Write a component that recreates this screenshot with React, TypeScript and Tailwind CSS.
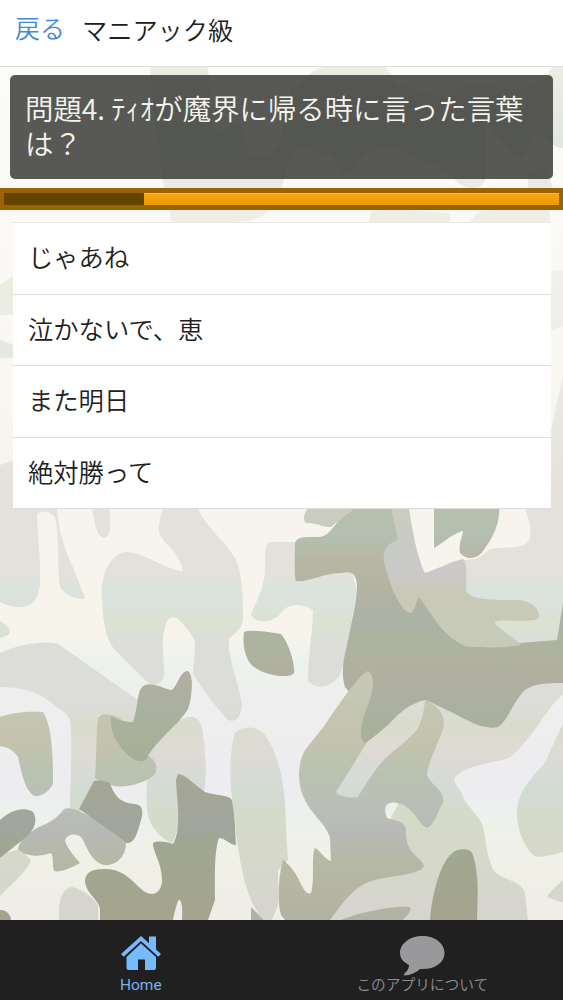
const choices = ["じゃあね", "泣かないで、恵", "また明日", "絶対勝って"]

const elapsed = 25.2

const lightShapes = [
  "M0 508H57C58 530 65 550 72 565L85 598C80 602 62 594 60 586C57 570 60 540 55 518C50 510 38 510 37 515C38 540 41 560 40 585C38 600 32 607 20 607C10 607 5 604 0 602Z",
  "M0 465L14 460V509H0Z",
  "M92 500H110V530C108 540 101 539 98 533C94 524 94 516 92 508Z",
  "M0 621C7 625 13 630 8 635L0 638Z",
  "M166 500C160 515 157 530 160 535C165 545 180 552 183 571C165 570 147 553 125 552C110 555 102 574 102 590C102 620 106 640 115 650L148 683C155 686 163 685 164 675C165 660 160 645 165 627C168 616 174 614 182 623C190 633 195 637 195 646L193 674C203 690 215 706 228 720C235 722 240 720 242 705C239 683 231 668 229 648V638C235 634 243 628 243 618C243 590 241 572 237 562C230 545 203 525 198 508V500Z",
  "M270 542C265 545 265 550 265 572C263 590 257 600 251 614C254 624 272 624 281 613C287 604 300 602 313 610C312 640 307 665 308 681C315 689 330 690 340 675L345 660L357 590L350 565L295 575V542Z",
  "M0 653C20 644 45 640 58 644L138 700V725L98 715L96 780L80 812L70 808C70 780 73 740 70 720C65 709 58 710 52 703C35 690 20 687 0 687Z",
  "M148 755C160 735 172 722 185 718C195 714 202 720 203 735C206 758 207 775 204 791L180 774L178 800C180 820 178 835 172 843C160 838 148 826 147 808C145 785 150 770 148 755Z",
  "M20 849L31 860C25 875 10 885 0 896V855Z",
  "M59 920C58 900 62 888 72 887C85 890 95 900 98 905V920Z",
  "M235 733C242 725 258 726 265 735C280 755 286 790 286 830L288 860L278 870V905L272 920H265C245 905 237 850 234 810C228 780 230 750 235 733Z",
  "M460 560C475 560 480 558 490 549C510 546 528 550 530 537C532 525 527 515 525 508V500H563V645H470Z",
  "M426 700L480 670L563 670V694C548 706 535 735 511 757C495 764 468 763 454 778C456 790 463 790 463 798C475 815 483 820 484 832C487 850 490 868 496 873C508 882 520 880 525 893L528 920H325L375 850L420 760Z",
  "M563 724C550 750 545 765 541 767C525 785 517 795 517 815C518 835 528 855 538 857C550 856 560 853 563 852Z",
  "M563 880C556 886 550 892 547 897C554 900 560 902 563 902Z",
]

const midShapes = [
  "M0 717C12 712 30 711 43 712C52 725 53 755 53 783C50 792 40 797 34 796C25 790 22 775 18 757C12 748 5 747 0 746Z",
  "M98 718C102 712 110 714 120 718L145 755C154 757 159 766 155 774C145 784 125 788 114 786C105 782 98 781 95 778C97 750 96 730 98 718Z",
  "M64 809C72 806 85 814 100 822L126 843C126 855 118 866 104 865C92 862 88 850 82 838C76 832 66 834 65 841C68 850 76 858 80 863C72 868 58 873 54 871C52 865 54 857 51 853C40 857 25 857 18 849C20 838 35 828 46 824C53 820 59 816 64 809Z",
  "M251 907L264 920H251Z",
  "M308 508C303 515 303 520 306 523C315 522 325 528 331 527L355 508Z",
  "M391 508H409C412 530 418 560 425 573C440 568 455 560 463 559C468 563 466 575 466 590C470 600 490 600 520 600C535 602 540 612 539 618C530 624 505 618 494 622C500 630 515 638 521 645C505 648 475 648 465 646C440 635 430 610 419 597C415 605 414 613 410 613C400 610 390 585 388 575C380 555 383 545 398 540Z",
  "M368 671C358 675 335 710 325 725L305 750C297 765 297 785 305 800C312 815 327 825 330 838L331 861C325 860 320 850 315 848C311 855 315 880 311 893C305 897 300 880 295 873C290 865 285 862 283 859C278 880 277 900 281 915L285 920H330C345 900 355 885 375 880C395 875 420 875 424 866C420 855 405 855 406 830C405 820 395 821 387 818C380 800 395 800 405 806C415 812 420 825 427 828C435 825 438 810 443 803C446 790 430 785 427 775C427 765 440 740 444 725C445 712 435 705 426 700L366 744C357 740 361 722 368 705C374 690 375 675 368 671Z",
  "M341 920C360 912 395 905 410 907C412 912 405 917 403 920Z",
]

const darkShapes = [
  "M111 716C118 720 125 722 133 722C140 700 136 690 145 685C155 682 165 690 172 690C178 685 180 671 188 671C194 675 192 695 189 706C185 720 155 740 146 760C138 765 125 755 118 743C112 735 110 725 111 716Z",
  "M94 781C98 779 106 781 110 783C115 798 122 803 135 804C142 805 144 810 141 820C137 835 134 844 126 843C110 830 95 820 79 809Z",
  "M0 820C10 810 25 806 33 812C38 820 35 830 25 838L0 858Z",
  "M0 910C6 909 11 915 11 920H0Z",
  "M178 774C185 774 195 785 205 792C215 796 228 794 232 800C235 815 235 830 236 845C230 845 225 838 219 838C214 850 215 880 215 900L208 920H182C183 905 181 900 179 900C177 901 174 915 173 920H100V910C100 900 87 895 85 882C85 872 92 869 104 869C125 868 135 885 145 892C153 896 160 894 162 882C163 865 152 850 153 843C158 840 168 842 173 844C182 830 177 800 176 780Z",
  "M244 632C250 629 270 632 281 634C290 645 295 665 294 673C290 680 255 675 248 660C243 650 243 640 244 632Z",
  "M434 500H499C501 520 495 535 485 548C480 558 468 562 460 553C458 545 463 535 463 531C455 532 440 545 434 548Z",
  "M430 920C432 895 440 860 455 851C465 847 472 850 473 855C479 875 478 895 477 920Z",
]

// Drawn beneath the mid tones, which overlap its right side
const darkBase =
  "M350 500H400L410 560L430 595L480 640L520 643L557 640L563 603V683C540 683 530 685 522 693C512 705 508 720 498 727C485 730 470 722 455 714L426 700C410 705 395 722 385 728L365 744C355 735 362 720 365 710L345 687C340 670 345 655 348 640C352 620 357 600 357 585C356 572 350 571 341 573C325 573 305 583 296 581C294 575 295 550 295 543C297 536 305 537 318 537C330 537 333 525 350 508Z"

const topShapes = [
  "M150 66H208C210 90 208 115 215 132L240 120C246 140 244 157 262 156C278 154 284 135 284 115L290 90L312 72L325 66H385L398 84C430 90 445 110 460 87C480 80 500 88 520 90L545 78L553 66H563V148C550 148 545 130 530 138C527 158 519 160 513 156C505 145 495 135 487 120C483 140 487 165 485 180C480 192 465 190 455 180C445 165 430 165 405 153C385 145 365 148 358 162L350 175C345 176 335 165 332 155L300 148C285 160 287 180 278 195L264 215C255 222 235 223 172 223C168 200 160 180 160 150C155 130 152 100 150 66Z",
  "M372 211L390 209L450 213V223H368Z",
  "M478 212L500 209H550V223H468Z",
  "M528 173L545 166L553 188H528Z",
]

const sideShapes = [
  "M551 270H563V326L551 330Z",
  "M563 375L551 430V508H563Z",
]

function Camouflage() {
  return (
    <svg
      className="col-start-1 row-start-1 block h-[1000px] w-[563px]"
      viewBox="0 0 563 1000"
      aria-hidden="true"
    >
      <defs>
        <linearGradient id="base" gradientUnits="userSpaceOnUse" x1="0" y1="0" x2="0" y2="1000">
          <stop offset="0.07" stopColor="#fcfbf7" />
          <stop offset="0.25" stopColor="#fbf9f6" />
          <stop offset="0.5" stopColor="#f7f4ee" />
          <stop offset="0.635" stopColor="#f7f4ec" />
          <stop offset="0.66" stopColor="#edf2ed" />
          <stop offset="0.71" stopColor="#eeeeee" />
          <stop offset="0.79" stopColor="#ededf0" />
          <stop offset="0.825" stopColor="#eef1eb" />
          <stop offset="0.86" stopColor="#f0f0e7" />
          <stop offset="0.92" stopColor="#efede6" />
        </linearGradient>
        <linearGradient id="light" gradientUnits="userSpaceOnUse" x1="0" y1="0" x2="0" y2="1000">
          <stop offset="0.22" stopColor="#f5f3f0" />
          <stop offset="0.35" stopColor="#eeece8" />
          <stop offset="0.5" stopColor="#e4e1dc" />
          <stop offset="0.576" stopColor="#e4e1da" />
          <stop offset="0.584" stopColor="#dce3dc" />
          <stop offset="0.605" stopColor="#dbe2dc" />
          <stop offset="0.62" stopColor="#dbe2d2" />
          <stop offset="0.645" stopColor="#dcddd8" />
          <stop offset="0.7" stopColor="#dddcda" />
          <stop offset="0.725" stopColor="#dadccd" />
          <stop offset="0.755" stopColor="#dedad6" />
          <stop offset="0.787" stopColor="#d3dbd5" />
          <stop offset="0.815" stopColor="#d5dac9" />
          <stop offset="0.86" stopColor="#d6d8ca" />
          <stop offset="0.92" stopColor="#d5d4cf" />
        </linearGradient>
        <linearGradient id="mid" gradientUnits="userSpaceOnUse" x1="0" y1="0" x2="0" y2="1000">
          <stop offset="0.51" stopColor="#cacdbd" />
          <stop offset="0.545" stopColor="#c7cbc4" />
          <stop offset="0.57" stopColor="#cbc9c9" />
          <stop offset="0.595" stopColor="#c9c9b6" />
          <stop offset="0.645" stopColor="#c6cbb9" />
          <stop offset="0.71" stopColor="#c4c6b1" />
          <stop offset="0.742" stopColor="#c4c2ae" />
          <stop offset="0.77" stopColor="#b9c3b0" />
          <stop offset="0.81" stopColor="#b9beb7" />
          <stop offset="0.835" stopColor="#b8b8b5" />
          <stop offset="0.86" stopColor="#b5b9a6" />
          <stop offset="0.9" stopColor="#b7b3a2" />
          <stop offset="0.92" stopColor="#afb2a4" />
        </linearGradient>
        <linearGradient id="dark" gradientUnits="userSpaceOnUse" x1="0" y1="0" x2="0" y2="1000">
          <stop offset="0.51" stopColor="#b5bfad" />
          <stop offset="0.535" stopColor="#b4bfb1" />
          <stop offset="0.56" stopColor="#b6b7a3" />
          <stop offset="0.6" stopColor="#b2b2a4" />
          <stop offset="0.625" stopColor="#abb2a5" />
          <stop offset="0.645" stopColor="#adb49d" />
          <stop offset="0.68" stopColor="#b2aea1" />
          <stop offset="0.71" stopColor="#a9b1a0" />
          <stop offset="0.74" stopColor="#a9b199" />
          <stop offset="0.79" stopColor="#a4a596" />
          <stop offset="0.825" stopColor="#a1a69d" />
          <stop offset="0.85" stopColor="#a0a790" />
          <stop offset="0.92" stopColor="#a5a48f" />
        </linearGradient>
        <linearGradient id="top" gradientUnits="userSpaceOnUse" x1="0" y1="66" x2="0" y2="223">
          <stop offset="0" stopColor="#ecede3" />
          <stop offset="0.5" stopColor="#e3e7e0" />
          <stop offset="1" stopColor="#efeee7" />
        </linearGradient>
      </defs>
      <rect width="563" height="1000" fill="url(#base)" />
      <path d="M0 285L14 275V315H0Z" fill="#ebece2" />
      <path d="M0 340L14 345V358H0Z" fill="#e6e9e2" />
      <g fill="url(#top)">
        {topShapes.map((d) => (
          <path key={d} d={d} />
        ))}
      </g>
      <g fill="url(#light)">
        {lightShapes.map((d) => (
          <path key={d} d={d} />
        ))}
        {sideShapes.map((d) => (
          <path key={d} d={d} />
        ))}
      </g>
      <path d={darkBase} fill="url(#dark)" />
      <g fill="url(#mid)">
        {midShapes.map((d) => (
          <path key={d} d={d} />
        ))}
      </g>
      <path
        d="M425 700C410 703 398 714 388 725L366 744L336 792C340 798 355 798 358 797C365 785 375 770 381 763C395 748 412 738 418 728C423 718 424 710 425 700Z"
        fill="url(#light)"
      />
      <g fill="url(#dark)">
        {darkShapes.map((d) => (
          <path key={d} d={d} />
        ))}
      </g>
    </svg>
  )
}

function HomeIcon() {
  return (
    <svg className="h-[34px] w-10" viewBox="0 0 40 34" fill="#76baff" aria-hidden="true">
      <path d="M20 0L28 7.3V0.5H35V13.5L40 18L37.3 20.7L20 5L2.7 20.7L0 18Z" />
      <path d="M20 7.5L35 21V32Q35 34 33 34H24V23.5H17V34H7.500Q5.500 34 5.500 32V21Z" />
    </svg>
  )
}

function BubbleIcon() {
  return (
    <svg className="h-10 w-[45px]" viewBox="0 0 45 40" fill="#99999b" aria-hidden="true">
      <path d="M22.500 0C35 0 44.500 7.500 44.500 17C44.500 27 34 34 20 33C16.500 36.500 10 39.500 4.500 39.500Q3 39 4.500 37.500C7.500 35 9 32 9 29C3 26 0 22 0 17C0 7.500 10 0 22.500 0Z" />
    </svg>
  )
}

export default function App() {
  return (
    <div className="grid h-[1000px] w-[563px] overflow-hidden bg-white font-['Noto_Sans_CJK_JP',sans-serif]">
      <Camouflage />

      <div className="z-10 col-start-1 row-start-1 flex h-[1000px] flex-col">
        <header className="flex h-[67px] shrink-0 border-b border-[#dfdfdd] bg-white pl-[15px] whitespace-nowrap">
          <button className="h-[54px] w-[67px] text-left text-[25px] leading-[54px] font-[350] text-[#4488d8]">
            戻る
          </button>
          <h1 className="text-[25.2px] leading-[58px] font-[350] text-[#202020]">マニアック級</h1>
        </header>

        <main className="flex min-h-0 flex-1 flex-col">
          <p className="mx-[10px] mt-2 h-[104px] rounded-[5px] bg-[#3b3c38]/85 pt-[15px] pl-[15px] text-[28.4px] leading-[35px] font-[350] whitespace-nowrap text-[#f4f4ef]">
            問題4. <span className="inline-block w-[43px]">ﾃｨｵ</span>が魔界に帰る時に言った言葉
            <br />
            は？
          </p>

          <div className="mt-[9px] h-[22px] bg-[#9a6404] px-1 py-[5px]">
            <div className="flex h-full">
              <div className="bg-[#644301]" style={{ width: `${elapsed}%` }} />
              <div className="flex-1 border-t border-[#f8bd45] bg-gradient-to-b from-[#f5a711] to-[#ee9800]" />
            </div>
          </div>

          <ul className="mt-3 mr-3 ml-[13px] border-t border-[#e9e8e5]">
            {choices.map((choice) => (
              <li
                key={choice}
                className="flex h-[71.500px] items-center border-b border-[#dcdcdc] bg-white pb-[3px] pl-[15px] text-[25.3px] leading-none font-[350] text-[#202020]"
              >
                {choice}
              </li>
            ))}
          </ul>
        </main>

        <nav className="grid h-20 shrink-0 grid-cols-2 bg-[#202021]">
          <a className="flex flex-col items-center pt-4 text-[#76b2ee]">
            <HomeIcon />
            <span className="mt-[5px] font-['Roboto',sans-serif] text-[15.5px] leading-5">Home</span>
          </a>
          <a className="flex flex-col items-center pt-4 text-[#8f8f92]">
            <BubbleIcon />
            <span className="-mt-0.5 text-[14.7px] leading-5 font-[350] whitespace-nowrap">
              このアプリについて
            </span>
          </a>
        </nav>
      </div>
    </div>
  )
}
